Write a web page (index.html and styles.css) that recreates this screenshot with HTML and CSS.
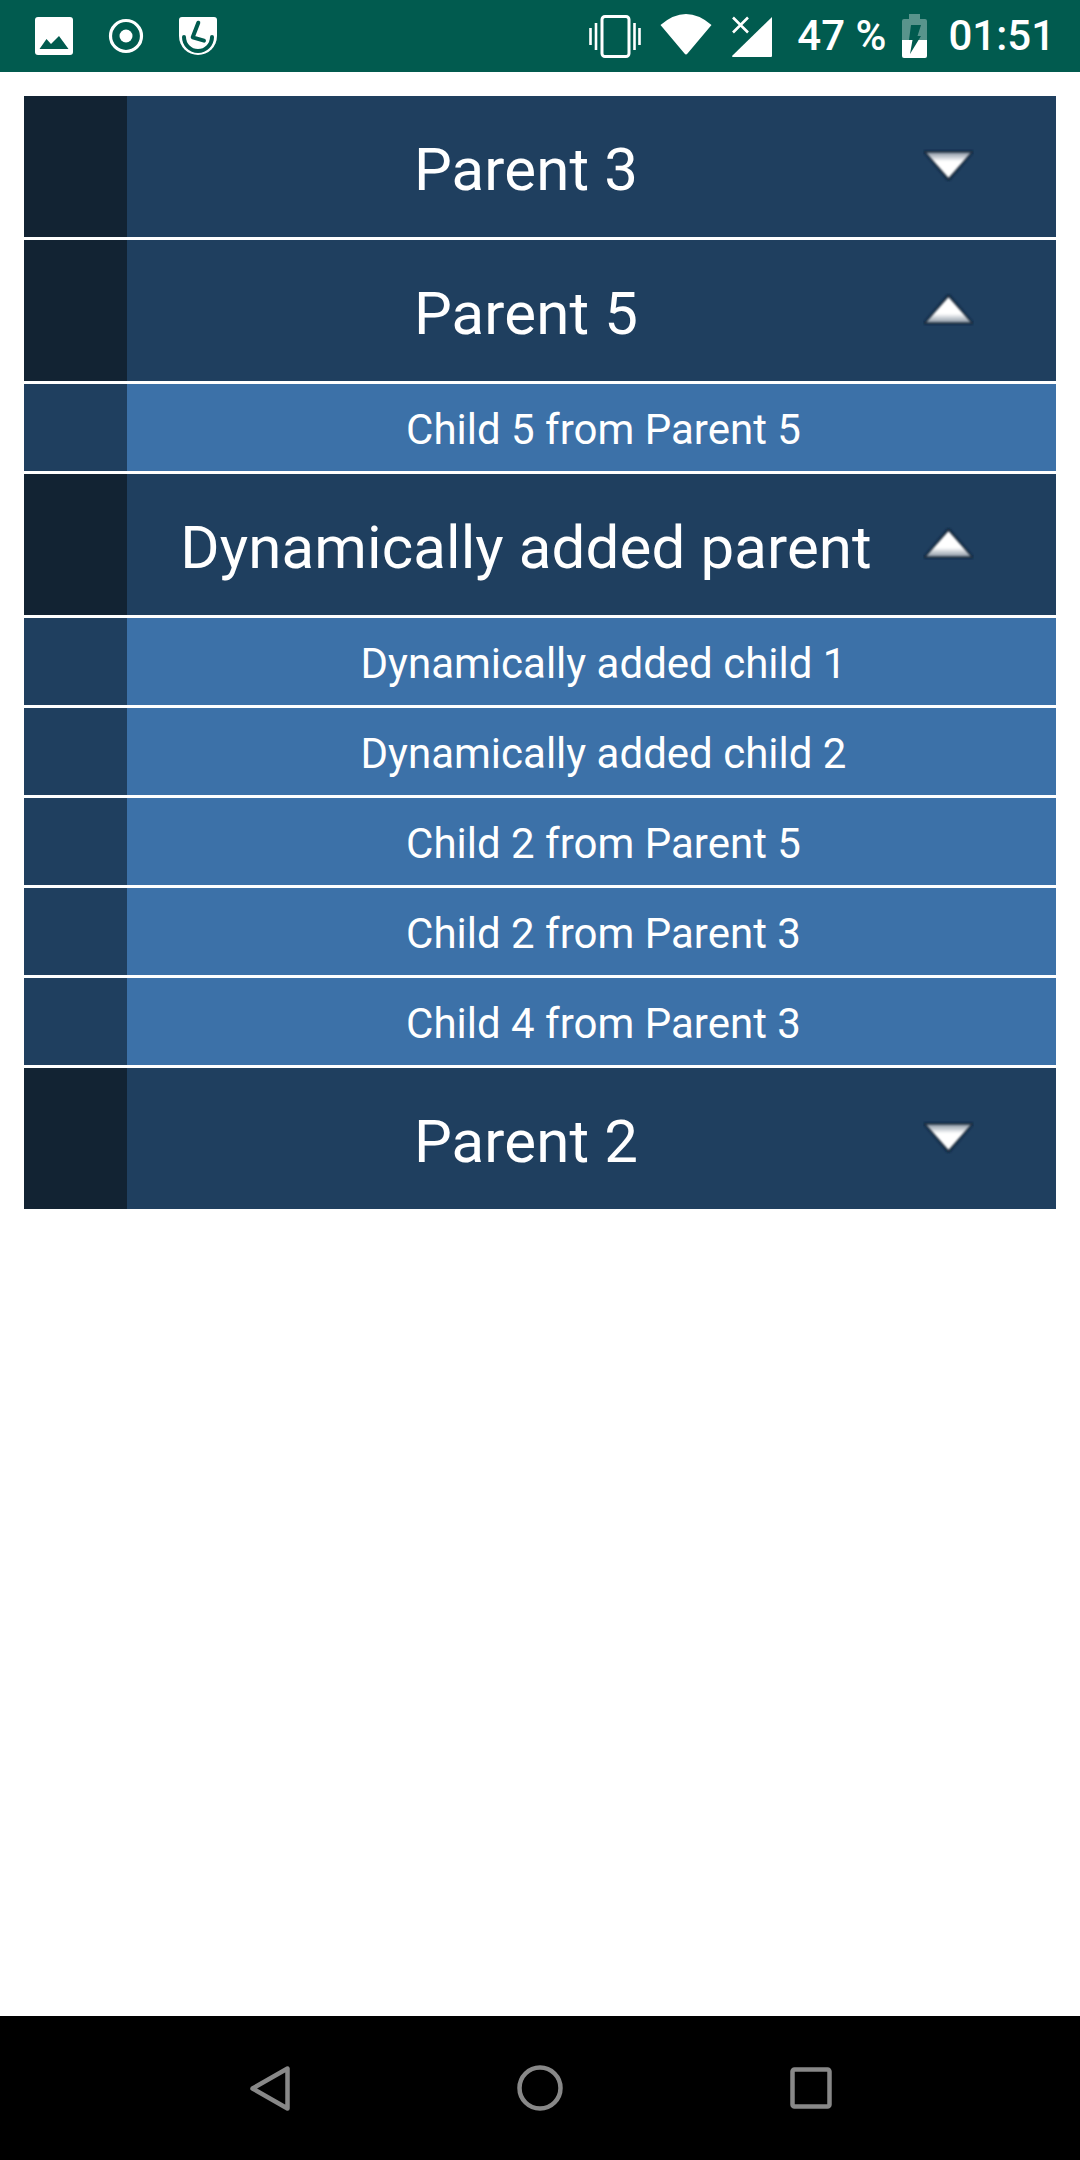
FILE: index.html
```html
<html>
<head>
    <title>Expandable list</title>
    <meta name="viewport" content="width=device-width, initial-scale=1" />
    <link rel="stylesheet" href="styles.css">
</head>
<body>
<div id="statusbar">
    <div class="status-left">
        <svg class="icon-notif" viewBox="0 0 38 38"><rect width="38" height="38" rx="3" fill="#fff"/><path d="M4.5 32 L11.5 22 L16 27 L24 19 L33.5 32 Z" fill="#015b4f"/></svg>
        <svg class="icon-notif" viewBox="0 0 38 38"><circle cx="19" cy="19" r="15.5" fill="none" stroke="#fff" stroke-width="3.2"/><circle cx="19" cy="19" r="6.5" fill="#fff"/></svg>
        <svg class="icon-notif" viewBox="0 0 38 38"><path d="M3 0 H35 a3 3 0 0 1 3 3 V19 a19 19 0 0 1 -38 0 V3 a3 3 0 0 1 3 -3 Z" fill="#fff"/><path d="M19.3 5.7 L13.7 20.3 L25 23.7 M5 20 a14 14 0 0 0 28 0" fill="none" stroke="#015b4f" stroke-width="4" stroke-linecap="round" stroke-linejoin="round"/></svg>
    </div>
    <div class="status-right">
        <svg class="icon-vibrate" viewBox="0 0 52 43"><rect x="13" y="1.5" width="27" height="40" rx="3" fill="none" stroke="#fff" stroke-width="3"/><path d="M1.5 13 V30 M7 8 V35 M45.5 8 V35 M50.5 13 V30" stroke="#fff" stroke-width="2.6" fill="none"/></svg>
        <svg class="icon-wifi" viewBox="0 0 52 41"><path d="M0.5 11 Q26 -11 51.5 11 L27.5 39.5 Q26 41.5 24.5 39.5 Z" fill="#fff"/></svg>
        <svg class="icon-signal" viewBox="0 0 41 41"><path d="M41 1 V40 a1 1 0 0 1 -1 1 H2 a1 1 0 0 1 -1 -1 Z" fill="#fff"/><path d="M2 1.5 L17 16.5 M17 1.5 L2 16.5" stroke="#fff" stroke-width="2.6" fill="none"/></svg>
        <span class="status-text battery-pct">47 %</span>
        <svg class="icon-battery" viewBox="0 0 25 44"><path d="M7 0 H18 V5 H23 a2 2 0 0 1 2 2 V26 H0 V7 a2 2 0 0 1 2 -2 H7 Z" fill="#fff" fill-opacity="0.35"/><path d="M0 26 H25 V42 a2 2 0 0 1 -2 2 H2 a2 2 0 0 1 -2 -2 Z" fill="#fff"/><path d="M9 11 H19 L15.5 22 H19 L8 40 L10.5 26 H7 Z" fill="#015b4f"/></svg>
        <span class="status-text clock">01:51</span>
    </div>
</div>

<svg class="defs-holder" width="0" height="0">
    <defs>
        <linearGradient id="arrowfill" x1="0" y1="0" x2="0" y2="1">
            <stop offset="0" stop-color="#8d99a6"/>
            <stop offset="0.35" stop-color="#fff"/>
        </linearGradient>
        <filter id="arrowblur" x="-20%" y="-20%" width="140%" height="140%"><feGaussianBlur stdDeviation="0.8"/></filter>
        <filter id="arrowhalo" x="-20%" y="-30%" width="140%" height="160%"><feGaussianBlur stdDeviation="1.800"/></filter>
        <symbol id="arrow" viewBox="0 0 51 33">
            <path d="M0 2 H51 L25.500 32 Z" fill="#0a1c2e" filter="url(#arrowhalo)"/>
            <path d="M3 3.500 H48 L25.500 29 Z" fill="url(#arrowfill)" filter="url(#arrowblur)"/>
        </symbol>
    </defs>
</svg>

<div id="content">
    <ul class="explist">
        <li class="row parent">
            <div class="side"></div>
            <div class="main"><span class="label">Parent 3</span><span class="arrowbox"><svg class="arrow"><use href="#arrow"/></svg></span></div>
        </li>
        <li class="row parent">
            <div class="side"></div>
            <div class="main"><span class="label">Parent 5</span><span class="arrowbox"><svg class="arrow up"><use href="#arrow"/></svg></span></div>
        </li>
        <li class="row child">
            <div class="side"></div>
            <div class="main">Child 5 from Parent 5</div>
        </li>
        <li class="row parent">
            <div class="side"></div>
            <div class="main"><span class="label">Dynamically added parent</span><span class="arrowbox"><svg class="arrow up"><use href="#arrow"/></svg></span></div>
        </li>
        <li class="row child">
            <div class="side"></div>
            <div class="main">Dynamically added child 1</div>
        </li>
        <li class="row child">
            <div class="side"></div>
            <div class="main">Dynamically added child 2</div>
        </li>
        <li class="row child">
            <div class="side"></div>
            <div class="main">Child 2 from Parent 5</div>
        </li>
        <li class="row child">
            <div class="side"></div>
            <div class="main">Child 2 from Parent 3</div>
        </li>
        <li class="row child">
            <div class="side"></div>
            <div class="main">Child 4 from Parent 3</div>
        </li>
        <li class="row parent">
            <div class="side"></div>
            <div class="main"><span class="label">Parent 2</span><span class="arrowbox"><svg class="arrow"><use href="#arrow"/></svg></span></div>
        </li>
    </ul>
</div>

<div id="navbar">
    <svg class="nav-back" viewBox="0 0 40 45"><path d="M37.500 2.500 V42.500 L2.500 22.500 Z" fill="none" stroke="#888" stroke-width="4.500" stroke-linejoin="round"/></svg>
    <svg class="nav-home" viewBox="0 0 46 46"><circle cx="23" cy="23" r="20.500" fill="none" stroke="#888" stroke-width="4.500"/></svg>
    <svg class="nav-recent" viewBox="0 0 42 42"><rect x="2.500" y="2.500" width="37" height="37" rx="2" fill="none" stroke="#888" stroke-width="4.500"/></svg>
</div>
</body>
</html>
```
FILE: styles.css
```css
body {
    margin: 0;
    height: 2160px;
    display: flex;
    flex-direction: column;
    overflow: hidden;
    background: #fff;
    font-family: Roboto, sans-serif;
    color: #fff;
}

/* status bar */
#statusbar {
    height: 72px;
    flex: none;
    background: #015b4f;
    display: flex;
    justify-content: space-between;
    align-items: center;
}

.status-left {
    display: flex;
    align-items: center;
    gap: 34px;
    padding-left: 35px;
}

.icon-notif {
    width: 38px;
    height: 38px;
}

.status-right {
    display: flex;
    align-items: center;
    padding-right: 25px;
}

.icon-vibrate {
    width: 52px;
    height: 43px;
    margin-top: 1px;
}

.icon-wifi {
    width: 52px;
    height: 41px;
    margin-left: 19px;
    margin-top: -3px;
}

.icon-signal {
    width: 41px;
    height: 41px;
    margin-left: 19px;
    margin-top: 1px;
}

.icon-battery {
    width: 25px;
    height: 44px;
    margin-left: 16px;
}

.status-text {
    font-size: 42px;
    font-weight: 500;
    line-height: 72px;
}

.battery-pct {
    margin-left: 25px;
}

.clock {
    margin-left: 21px;
}

.defs-holder {
    position: absolute;
}

/* list */
#content {
    flex: 1;
    padding: 24px;
}

.explist {
    list-style: none;
    margin: 0;
    padding: 0;
    display: flex;
    flex-direction: column;
    gap: 3px;
}

.row {
    display: flex;
}

.side {
    width: 103px;
    flex: none;
}

.main {
    flex: 1;
    display: flex;
    align-items: center;
}

.parent {
    height: 141px;
    font-size: 60px;
    letter-spacing: 0.12px;
}

.parent .side {
    background: #122333;
}

.parent .main {
    background: #1f3f5f;
}

.label {
    width: 798px;
    padding-top: 5px;
    text-align: center;
}

.arrowbox {
    display: flex;
    align-items: center;
    padding-bottom: 3px;
    margin-left: -2px;
}

.arrow {
    width: 51px;
    height: 33px;
    display: block;
}

.arrow.up {
    transform: scaleY(-1);
}

.child {
    height: 87px;
    font-size: 42px;
}

.child .side {
    background: #1f3f5f;
}

.child .main {
    background: #3c71a8;
    justify-content: center;
    padding-left: 24px;
    padding-top: 3px;
    box-sizing: border-box;
}

/* nav bar */
#navbar {
    height: 144px;
    flex: none;
    background: #000;
    display: flex;
    justify-content: center;
    align-items: center;
    gap: 227px;
    padding-left: 1px;
}

.nav-back {
    width: 40px;
    height: 45px;
}

.nav-home {
    width: 46px;
    height: 46px;
}

.nav-recent {
    width: 42px;
    height: 42px;
}
```
